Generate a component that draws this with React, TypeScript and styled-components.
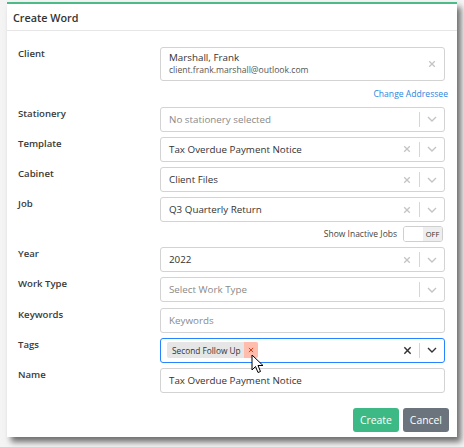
import React from "react";
import styled, { createGlobalStyle, css } from "styled-components";

const GlobalStyle = createGlobalStyle`
  html, body {
    margin: 0;
    padding: 0;
    background: #f4f4f4;
    font-family: "Open Sans", "Noto Sans", Arial, sans-serif;
    color: #333;
  }
  * { box-sizing: border-box; }
`;

const Page = styled.div`
  width: 464px;
  height: 447px;
  padding: 2px 0 0 7px;
  overflow: hidden;
  position: relative;
`;

const Dialog = styled.div`
  width: 450px;
  height: 435px;
  background: #fff;
  border-top: 2px solid #4dbb88;
  box-shadow: 4px 5px 6px rgba(0, 0, 0, 0.55);
  display: flex;
  flex-direction: column;
`;

const Header = styled.div`
  height: 27px;
  padding: 1px 6px 0;
  display: flex;
  align-items: center;
  font-size: 10.8px;
  font-weight: 600;
  color: #333;
  border-bottom: 1px solid #e6e6e6;
`;

const Body = styled.div`
  padding: 16px 12px 0 11px;
  display: flex;
  flex-direction: column;
  gap: 5.3px;
`;

const Row = styled.div`
  display: grid;
  grid-template-columns: 142px 1fr;
  align-items: start;
`;

const Label = styled.div`
  font-size: 9.6px;
  font-weight: 600;
  color: #3a3a3a;
  line-height: 14px;
`;

const Field = styled.div<{ $focused?: boolean; $tall?: boolean }>`
  height: ${(p) => (p.$tall ? "34px" : "25px")};
  border: 1px solid #d3d3d3;
  border-radius: 3px;
  display: flex;
  align-items: center;
  padding-left: 8px;
  font-size: 9.8px;
  color: #333;
  background: #fff;
  ${(p) =>
    p.$focused &&
    css`
      border: 1.5px solid #2684ff;
      padding-left: 6px;
    `}
`;

const Value = styled.div<{ $placeholder?: boolean }>`
  flex: 1;
  display: flex;
  align-items: center;
  color: ${(p) => (p.$placeholder ? "#8a8a8a" : "#333")};
  white-space: nowrap;
`;

const ClientText = styled.div`
  flex: 1;
  display: flex;
  flex-direction: column;
  line-height: 13px;
`;

const ClientEmail = styled.span`
  font-size: 8.6px;
  color: #555;
`;

const Indicators = styled.div`
  display: flex;
  align-items: center;
  height: 100%;
`;

const IconBox = styled.div<{ $dark?: boolean }>`
  width: 24px;
  height: 100%;
  display: flex;
  align-items: center;
  justify-content: center;
  color: ${(p) => (p.$dark ? "#333" : "#c4c4c4")};
`;

const Separator = styled.span`
  width: 1px;
  height: 15px;
  background: #d6d6d6;
`;

const SubRow = styled.div`
  display: flex;
  justify-content: flex-end;
  align-items: center;
  margin: 0 -3px -1px 0;
`;

const LinkText = styled.span`
  font-size: 8.6px;
  color: #2b86e0;
  line-height: 14px;
  padding: 1px 0 1px;
`;

const ToggleRow = styled.div`
  display: flex;
  justify-content: flex-end;
  align-items: center;
  gap: 6px;
  padding-right: 2px;
  margin: -2px 0 0;
`;

const ToggleLabel = styled.span`
  font-size: 8.5px;
  color: #444;
`;

const Toggle = styled.div`
  width: 40px;
  height: 16px;
  border: 1px solid #cfcfcf;
  border-radius: 3px;
  display: flex;
  overflow: hidden;
`;

const ToggleHalf = styled.div<{ $off?: boolean }>`
  flex: 1;
  background: ${(p) => (p.$off ? "#eeeeee" : "#fff")};
  font-size: 7.5px;
  color: #333;
  display: flex;
  align-items: center;
  justify-content: center;
`;

const Chip = styled.div`
  display: inline-flex;
  align-items: stretch;
  height: 16px;
  background: #e6e6e6;
  border-radius: 2px;
  font-size: 8.3px;
  color: #333;
`;

const ChipText = styled.span`
  padding: 0 3px 0 5px;
  display: flex;
  align-items: center;
`;

const ChipRemove = styled.span`
  width: 14px;
  background: #ffbdad;
  color: #de350b;
  display: flex;
  align-items: center;
  justify-content: center;
  border-radius: 0 2px 2px 0;
`;

const Footer = styled.div`
  display: flex;
  justify-content: flex-end;
  gap: 4px;
  padding: 15px 8px 0 0;
`;

const Button = styled.button<{ $variant: "create" | "cancel" }>`
  height: 24px;
  padding: 0 7px;
  border: none;
  border-radius: 3px;
  font-family: inherit;
  font-size: 10.4px;
  color: #fff;
  background: ${(p) => (p.$variant === "create" ? "#3cb984" : "#6b747c")};
`;

const Cursor = styled.svg`
  position: absolute;
  left: 251px;
  top: 354px;
`;

const Cross = ({ size = 8 }: { size?: number }) => (
  <svg width={size} height={size} viewBox="0 0 10 10">
    <path d="M1.5 1.5 L8.5 8.5 M8.5 1.5 L1.5 8.5" stroke="currentColor" strokeWidth="1.6" />
  </svg>
);

const Chevron = () => (
  <svg width="10" height="6" viewBox="0 0 10 6">
    <path d="M1 1 L5 5 L9 1" fill="none" stroke="currentColor" strokeWidth="1.4" />
  </svg>
);

type SelectProps = {
  value: string;
  placeholder?: boolean;
  clearable?: boolean;
};

const Select = ({ value, placeholder, clearable = true }: SelectProps) => (
  <Field>
    <Value $placeholder={placeholder}>{value}</Value>
    <Indicators>
      {clearable && (
        <IconBox>
          <Cross />
        </IconBox>
      )}
      <Separator />
      <IconBox>
        <Chevron />
      </IconBox>
    </Indicators>
  </Field>
);

export default function App() {
  return (
    <>
      <GlobalStyle />
      <Page>
        <Dialog>
          <Header>Create Word</Header>
          <Body>
            <Row>
              <Label>Client</Label>
              <Field $tall>
                <ClientText>
                  <span>Marshall, Frank</span>
                  <ClientEmail>client.frank.marshall@outlook.com</ClientEmail>
                </ClientText>
                <IconBox>
                  <Cross />
                </IconBox>
              </Field>
            </Row>
            <SubRow>
              <LinkText>Change Addressee</LinkText>
            </SubRow>
            <Row>
              <Label>Stationery</Label>
              <Select value="No stationery selected" placeholder clearable={false} />
            </Row>
            <Row>
              <Label>Template</Label>
              <Select value="Tax Overdue Payment Notice" />
            </Row>
            <Row>
              <Label>Cabinet</Label>
              <Select value="Client Files" />
            </Row>
            <Row>
              <Label>Job</Label>
              <Select value="Q3 Quarterly Return" />
            </Row>
            <ToggleRow>
              <ToggleLabel>Show Inactive Jobs</ToggleLabel>
              <Toggle>
                <ToggleHalf />
                <ToggleHalf $off>OFF</ToggleHalf>
              </Toggle>
            </ToggleRow>
            <Row>
              <Label>Year</Label>
              <Select value="2022" />
            </Row>
            <Row>
              <Label>Work Type</Label>
              <Select value="Select Work Type" placeholder clearable={false} />
            </Row>
            <Row>
              <Label>Keywords</Label>
              <Field>
                <Value $placeholder>Keywords</Value>
              </Field>
            </Row>
            <Row>
              <Label>Tags</Label>
              <Field $focused>
                <Value>
                  <Chip>
                    <ChipText>Second Follow Up</ChipText>
                    <ChipRemove>
                      <Cross size={6} />
                    </ChipRemove>
                  </Chip>
                </Value>
                <Indicators>
                  <IconBox $dark>
                    <Cross size={9} />
                  </IconBox>
                  <Separator />
                  <IconBox $dark>
                    <Chevron />
                  </IconBox>
                </Indicators>
              </Field>
            </Row>
            <Row>
              <Label>Name</Label>
              <Field>
                <Value>Tax Overdue Payment Notice</Value>
              </Field>
            </Row>
          </Body>
          <Footer>
            <Button $variant="create">Create</Button>
            <Button $variant="cancel">Cancel</Button>
          </Footer>
        </Dialog>
        <Cursor width="13" height="20" viewBox="0 0 13 20">
          <path
            d="M1 1 L1 16 L4.5 12.5 L7 18.5 L9.5 17.5 L7 11.5 L12 11.5 Z"
            fill="#fff"
            stroke="#000"
            strokeWidth="1"
            strokeLinejoin="round"
          />
        </Cursor>
      </Page>
    </>
  );
}
